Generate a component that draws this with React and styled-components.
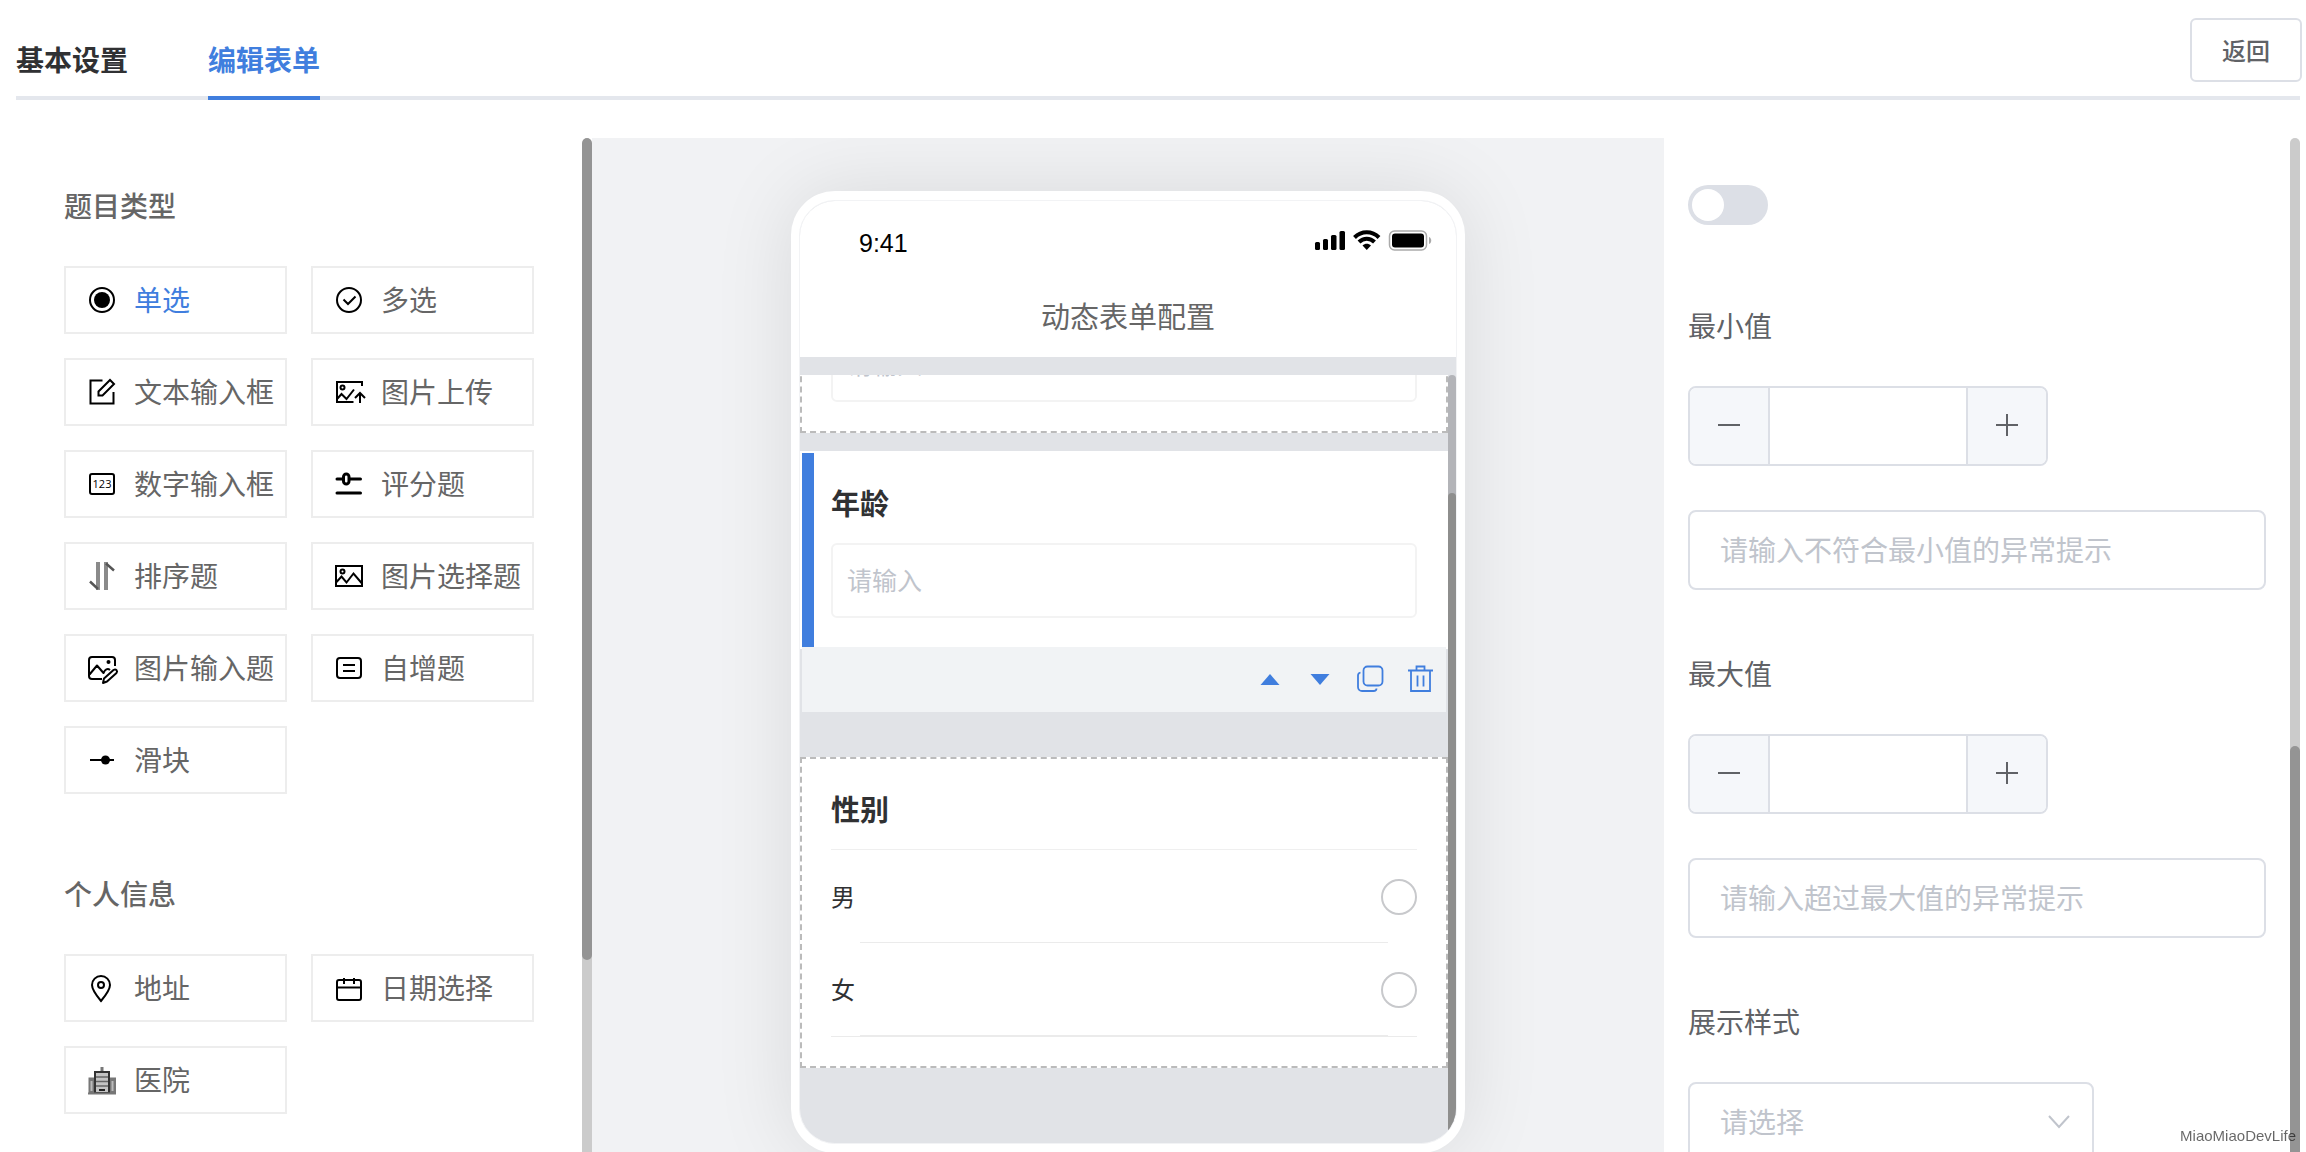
import React, { useLayoutEffect, useRef, useState } from 'react'
import styled, { createGlobalStyle } from 'styled-components'

const GlobalStyle = createGlobalStyle`
    * {
        box-sizing: border-box;
    }
    body {
        margin: 0;
        background: #fff;
        color: #666;
        font-family: "Noto Sans CJK SC", sans-serif;
        font-size: 28px;
    }
    button, input, select {
        font: inherit;
        color: inherit;
    }
    h2, h3, p {
        margin: 0;
    }
`

const stroke = { fill: 'none', stroke: '#000', strokeWidth: 2 }

const icons = {
    radio: <><circle cx="14" cy="14" r="12" {...stroke} /><circle cx="14" cy="14" r="8" /></>,
    check: <g {...stroke}><circle cx="14" cy="14" r="12" /><path d="M8.5 13.5l4.5 4.5 7.5-7.5" /></g>,
    text: <g {...stroke}><path d="M14.5 2.5h-12v23h23V14" /><path d="M10.5 17.5v-4L22 2l4 4-11.500 11.500z" /></g>,
    upload: (
        <g {...stroke}>
            <path d="M27 8V4H2v20h16.500M2.500 20.500l4-4.500 5 5 7.500-9.500" />
            <circle cx="7.500" cy="9.500" r="2" />
            <path d="M25 25V15M20 20l5-5 5 5" />
        </g>
    ),
    number: (
        <>
            <rect x="2" y="4" width="24" height="20" rx="2" {...stroke} />
            <text x="14" y="18" textAnchor="middle" fontFamily="Open Sans, sans-serif" fontWeight="500" fontSize="11">123</text>
        </>
    ),
    rate: (
        <g {...stroke} strokeWidth="3" strokeLinecap="round">
            <path d="M2 9h6M15 9h10.500" />
            <rect x="8.500" y="4" width="5.500" height="10" rx="2.750" />
            <path d="M2 23h23.500" />
        </g>
    ),
    sort: (
        <g fill="none">
            <path d="M10 0v28M18 0v28" stroke="#8a8a8a" strokeWidth="4" />
            <path d="M2 19.500l8 7.500M18 1.500l8 7" stroke="#555" strokeWidth="2.500" />
        </g>
    ),
    picture: (
        <g {...stroke}>
            <rect x="1" y="4" width="26" height="20" />
            <circle cx="7.500" cy="9.500" r="2" />
            <path d="M1.500 20l5-5.500 5 6 7-9L27 21.500" />
        </g>
    ),
    pictureEdit: (
        <>
            <g {...stroke} strokeLinejoin="round">
                <path d="M14 25H4a3 3 0 0 1-3-3V6a3 3 0 0 1 3-3h20a3 3 0 0 1 3 3v6" />
                <path d="M1.500 20.500l7.500-9 6.500 7.500c1.500-3.500 4-5 6.500-3" />
                <path d="M15 29l1-4.500 9.500-8.500c2.500-1.500 4.500 1 3 3l-9.500 8.500z" />
            </g>
            <circle cx="20.500" cy="8" r="2" />
        </>
    ),
    list: <g {...stroke}><rect x="2" y="4" width="24" height="20" rx="3" /><path d="M8 11h12M8 17h12" /></g>,
    slider: <><path d="M2 14h24" {...stroke} /><circle cx="17.500" cy="14" r="4.500" /></>,
    pin: <g {...stroke}><path d="M13 27C8 21 4 16 4 11a9 9 0 0 1 18 0c0 5-4 10-9 16z" /><circle cx="13" cy="11" r="3" /></g>,
    calendar: <g {...stroke}><rect x="2" y="6" width="24" height="20" rx="2" /><path d="M2 13.500h24M9 4v6M19 4v6" /></g>,
    hospital: (
        <>
            <path d="M0.500 11.500h6V28h-6zM22 11.500h6V28h-6z" fill="#777" />
            <path d="M14 1v5" stroke="#777" strokeWidth="3" />
            <rect x="7" y="6" width="14" height="21" fill="#c4c4c4" stroke="#333" strokeWidth="2" />
            <path d="M8 11h12M8 15.500h12M8 20h12" stroke="#666" strokeWidth="1.500" />
            <path d="M3.500 15v10M24.500 15v10" stroke="#bbb" strokeWidth="2" />
            <path d="M11 24h6" stroke="#222" strokeWidth="2" />
            <path d="M0 27.500h28" stroke="#777" strokeWidth="2" />
        </>
    ),
}

const groups = [
    {
        title: '题目类型',
        items: [
            ['radio', '单选'],
            ['check', '多选'],
            ['text', '文本输入框'],
            ['upload', '图片上传'],
            ['number', '数字输入框'],
            ['rate', '评分题'],
            ['sort', '排序题'],
            ['picture', '图片选择题'],
            ['pictureEdit', '图片输入题'],
            ['list', '自增题'],
            ['slider', '滑块'],
        ],
    },
    {
        title: '个人信息',
        items: [
            ['pin', '地址'],
            ['calendar', '日期选择'],
            ['hospital', '医院'],
        ],
    },
]

const limits = [
    { id: 'min', label: '最小值', placeholder: '请输入不符合最小值的异常提示' },
    { id: 'max', label: '最大值', placeholder: '请输入超过最大值的异常提示' },
]

function Limit({ id, label, placeholder }) {
    const [value, setValue] = useState('')

    return (
        <Field>
            <FieldLabel htmlFor={id}>{label}</FieldLabel>
            <Stepper>
                <StepButton aria-label="减少" onClick={() => setValue(Number(value) - 1)}>
                    <svg width="22" height="26" viewBox="0 0 22 26"><path d="M0 13h22" /></svg>
                </StepButton>
                <StepInput id={id} value={value} onChange={(e) => setValue(e.target.value)} />
                <StepButton aria-label="增加" onClick={() => setValue(Number(value) + 1)}>
                    <svg width="22" height="26" viewBox="0 0 22 26"><path d="M0 13h22M11 2v22" /></svg>
                </StepButton>
            </Stepper>
            <TextInput aria-label={label + '提示'} placeholder={placeholder} />
        </Field>
    )
}

function Preview() {
    const list = useRef(null)

    // the first question is already half scrolled away
    useLayoutEffect(() => {
        list.current.scrollTop = 80
    }, [])

    return (
        <Phone>
            <Screen>
                <PhoneHeader>
                    <StatusBar>
                        <span>9:41</span>
                        <svg width="118" height="24" viewBox="0 0 118 24">
                            <rect x="1" y="14" width="5" height="8" rx="1.500" />
                            <rect x="9" y="11" width="5" height="11" rx="1.500" />
                            <rect x="17" y="7" width="5.500" height="15" rx="1.500" />
                            <rect x="25.500" y="3" width="5.500" height="19" rx="1.500" />
                            <g fill="none" stroke="#000" strokeWidth="4">
                                <path d="M40.500 9.500c7-7 17.500-7 24.500 0" />
                                <path d="M45 14c4.500-4.500 11-4.500 15.500 0" />
                            </g>
                            <path d="M48.500 17.500c2.500-2.500 6-2.500 8.500 0L52.750 22z" />
                            <rect x="75.500" y="3" width="37" height="19" rx="5" fill="none" stroke="#aaa" strokeWidth="1.500" />
                            <rect x="78" y="5.500" width="32" height="14" rx="3" />
                            <path d="M115 9c3 1 3 6 0 7z" fill="#aaa" />
                        </svg>
                    </StatusBar>
                    <PhoneTitle>动态表单配置</PhoneTitle>
                </PhoneHeader>
                <ListArea>
                    <List ref={list}>
                        <Card>
                            <Answer aria-label="姓名" placeholder="请输入" />
                        </Card>
                        <Card $active>
                            <Question as="label" htmlFor="age">年龄</Question>
                            <Answer id="age" placeholder="请输入" />
                        </Card>
                        <Tools>
                            <Tool aria-label="上移">
                                <svg width="28" height="28" viewBox="0 0 28 28"><path d="M4.500 20L14 9l9.500 11z" fill="#407ede" /></svg>
                            </Tool>
                            <Tool aria-label="下移">
                                <svg width="28" height="28" viewBox="0 0 28 28"><path d="M4.500 9L14 20l9.500-11z" fill="#407ede" /></svg>
                            </Tool>
                            <Tool aria-label="复制">
                                <svg width="28" height="28" viewBox="0 0 28 28">
                                    <g fill="none" stroke="#407ede" strokeWidth="1.800">
                                        <rect x="7.500" y="1.500" width="19" height="19" rx="4" />
                                        <path d="M4.500 7.500C2.500 8 2 9 2 10.500V22a4 4 0 0 0 4 4h11.500c2 0 3-1 3-2.500" />
                                    </g>
                                </svg>
                            </Tool>
                            <Tool aria-label="删除">
                                <svg width="28" height="28" viewBox="0 0 28 28">
                                    <path d="M2 5.500h25M5 5.500v20.500h19V5.500M10.500 5.500V1.500h8v4M11.500 10.500v11M17.500 10.500v11" fill="none" stroke="#407ede" strokeWidth="1.800" />
                                </svg>
                            </Tool>
                        </Tools>
                        <Card>
                            <Question>性别</Question>
                            <Options>
                                <Option><span>男</span><input type="radio" name="gender" /></Option>
                                <Option><span>女</span><input type="radio" name="gender" /></Option>
                            </Options>
                        </Card>
                    </List>
                    <PhoneTrack><PhoneThumb /></PhoneTrack>
                </ListArea>
            </Screen>
        </Phone>
    )
}

function App() {
    return (
        <Page>
            <GlobalStyle />
            <Header>
                <Tabs>
                    <Tab href="#base">基本设置</Tab>
                    <Tab href="#form" $active>编辑表单</Tab>
                </Tabs>
                <BackButton>返回</BackButton>
            </Header>
            <Main>
                <Pane>
                    <Types>
                        {groups.map((group) => (
                            <section key={group.title}>
                                <GroupTitle>{group.title}</GroupTitle>
                                <Grid>
                                    {group.items.map(([icon, name]) => (
                                        <TypeButton key={name} $active={name === '单选'}>
                                            <svg width="28" height="28" viewBox="0 0 28 28">{icons[icon]}</svg>
                                            <span>{name}</span>
                                        </TypeButton>
                                    ))}
                                </Grid>
                            </section>
                        ))}
                    </Types>
                    <Track><Thumb $from={0} $size={822} /></Track>
                </Pane>
                <Canvas>
                    <Preview />
                </Canvas>
                <Pane>
                    <Settings>
                        <Switch type="checkbox" role="switch" aria-label="开关" />
                        {limits.map((item) => <Limit key={item.id} {...item} />)}
                        <Field>
                            <FieldLabel htmlFor="display">展示样式</FieldLabel>
                            <SelectBox>
                                <select id="display" defaultValue="">
                                    <option value="">请选择</option>
                                </select>
                                <svg width="22" height="14" viewBox="0 0 22 14">
                                    <path d="M1 1l10 11L21 1" fill="none" stroke="#c0c4cc" strokeWidth="2" />
                                </svg>
                            </SelectBox>
                        </Field>
                    </Settings>
                    <Track><Thumb $from={608} $size={600} /></Track>
                </Pane>
            </Main>
            <Watermark>MiaoMiaoDevLife</Watermark>
        </Page>
    )
}

const Page = styled.div`
    display: flex;
    flex-direction: column;
    height: 100vh;
    overflow: hidden;
`

const Header = styled.header`
    display: flex;
    justify-content: space-between;
    align-items: flex-start;
    height: 100px;
    flex: none;
    margin: 0 6px 38px 16px;
    box-shadow: inset 0 -4px 0 #e4e7ed;
`

const Tabs = styled.nav`
    display: flex;
    gap: 80px;
`

const Tab = styled.a`
    padding: 40px 0 18px;
    line-height: 38px;
    font-weight: 600;
    text-decoration: none;
    color: ${(props) => (props.$active ? '#407ede' : '#303133')};
    border-bottom: 4px solid ${(props) => (props.$active ? '#407ede' : 'transparent')};
`

const BackButton = styled.button`
    width: 112px;
    height: 64px;
    margin: 18px -2px 0 0;
    padding: 0 0 2px;
    background: #fff;
    border: 2px solid #dcdfe6;
    border-radius: 6px;
    color: #606266;
    font-size: 24px;
    font-weight: 500;
`

const Main = styled.main`
    display: grid;
    grid-template-columns: 576px 1fr 636px;
    grid-template-rows: minmax(0, 1fr);
    flex: 1;
    min-height: 0;
    margin: 0 6px 0 16px;
`

const Pane = styled.div`
    display: flex;
    min-width: 0;
    overflow: hidden;
`

const Track = styled.div`
    width: 10px;
    border-radius: 5px 5px 0 0;
    background: #cbcbcb;
    overflow: hidden;
`

const Thumb = styled.div`
    height: ${(props) => props.$size}px;
    margin-top: ${(props) => props.$from}px;
    border-radius: 5px;
    background: #949494;
`

const Types = styled.div`
    display: flex;
    flex-direction: column;
    gap: 80px;
    flex: 1;
    padding: 48px;
`

const GroupTitle = styled.h2`
    margin-bottom: 42px;
    font-size: 28px;
    line-height: 38px;
    font-weight: 500;
    color: #666;
`

const Grid = styled.div`
    display: grid;
    grid-template-columns: 1fr 1fr;
    gap: 24px;
`

const TypeButton = styled.button`
    display: flex;
    align-items: center;
    gap: 18px;
    height: 68px;
    padding: 0 0 0 22px;
    background: #fff;
    border: 2px solid #ededed;
    color: ${(props) => (props.$active ? '#407ede' : '#666')};
    white-space: nowrap;

    svg {
        flex: none;
        overflow: visible;
    }

    span {
        padding-bottom: 2px;
    }
`

const Canvas = styled.div`
    display: flex;
    justify-content: center;
    align-items: flex-start;
    padding-top: 53px;
    background: #f1f2f4;
    overflow: hidden;
`

const Phone = styled.div`
    width: 674px;
    padding: 9px 8px;
    background: #fff;
    border-radius: 44px;
    box-shadow: 0 0 80px rgba(0, 0, 0, 0.1);
`

const Screen = styled.div`
    display: flex;
    flex-direction: column;
    height: 944px;
    border: 1px solid #f2f3f5;
    border-radius: 36px;
    background: #e1e3e7;
    overflow: hidden;
`

const PhoneHeader = styled.div`
    height: 156px;
    flex: none;
    margin-bottom: 18px;
    background: #fff;
`

const StatusBar = styled.div`
    display: flex;
    justify-content: space-between;
    padding: 27px 24px 0 59px;
    line-height: 30px;
    font-family: "Liberation Sans", sans-serif;
    font-size: 25px;
    color: #000;
`

const PhoneTitle = styled.h2`
    margin-top: 38px;
    line-height: 38px;
    font-size: 29px;
    font-weight: 400;
    text-align: center;
`

const ListArea = styled.div`
    display: flex;
    flex: 1;
    min-height: 0;
`

const List = styled.div`
    flex: 1;
    padding-bottom: 80px;
    overflow: hidden;
`

const PhoneTrack = styled.div`
    width: 8px;
    border-radius: 4px 4px 0 0;
    background: #b3b4b8;
`

const PhoneThumb = styled.div`
    height: calc(100% - 118px);
    margin-top: 118px;
    border-radius: 4px 4px 0 0;
    background: #8e8e8d;
`

const Card = styled.div`
    margin-bottom: ${(props) => (props.$active ? 0 : 18)}px;
    padding: 30px 29px 29px;
    border: 2px dashed ${(props) => (props.$active ? '#fff' : '#bbb')};
    background: ${(props) => (props.$active
        ? 'linear-gradient(#407ede, #407ede) left / 12px 100% no-repeat padding-box, #fff'
        : '#fff')};
`

const Question = styled.h3`
    display: block;
    margin-bottom: 22px;
    line-height: 38px;
    font-size: 29px;
    font-weight: 600;
    color: #303133;
`

const Answer = styled.input`
    display: block;
    width: 100%;
    height: 75px;
    padding: 0 14px 3px;
    border: 2px solid #f3f3f3;
    border-radius: 6px;
    background: #fff;
    font-size: 25px;

    &::placeholder {
        color: #c0c4cc;
    }
`

const Tools = styled.div`
    position: relative;
    display: flex;
    justify-content: flex-end;
    align-items: center;
    gap: 22px;
    height: 65px;
    margin: -2px 2px 45px;
    padding: 0 12px 1px 0;
    background: #f1f3f5;
`

const Tool = styled.button`
    display: flex;
    padding: 0;
    border: none;
    background: none;
`

const Options = styled.div`
    border-top: 1px solid #efefef;
    border-bottom: 1px solid #ebebeb;
`

const Option = styled.label`
    display: flex;
    justify-content: space-between;
    align-items: center;
    height: 93px;
    font-size: 24px;
    color: #303133;
    background: linear-gradient(#ebebeb, #ebebeb) bottom / calc(100% - 58px) 1px no-repeat;

    span {
        padding-bottom: 3px;
    }

    input {
        appearance: none;
        width: 36px;
        height: 36px;
        margin: 0;
        border: 2px solid #c8c9cc;
        border-radius: 50%;
    }
`

const Settings = styled.div`
    flex: 1;
    min-width: 0;
    padding: 47px 24px;
`

const Switch = styled.input`
    appearance: none;
    display: block;
    width: 80px;
    height: 40px;
    margin: 0 0 81px;
    padding: 4px;
    border-radius: 20px;
    background: #dcdfe6;

    &::before {
        content: '';
        display: block;
        width: 32px;
        height: 32px;
        border-radius: 50%;
        background: #fff;
    }
`

const Field = styled.div`
    margin-bottom: 64px;
`

const FieldLabel = styled.label`
    display: block;
    margin-bottom: 42px;
    line-height: 38px;
    color: #606266;
`

const Stepper = styled.div`
    display: grid;
    grid-template-columns: 78px 1fr 78px;
    width: 360px;
    height: 80px;
    margin-bottom: 44px;
    border: 2px solid #dcdfe6;
    border-radius: 8px;
    overflow: hidden;
`

const StepButton = styled.button`
    display: flex;
    justify-content: center;
    align-items: center;
    padding: 0 0 2px;
    border: none;
    background: #f5f7fa;

    path {
        fill: none;
        stroke: #606266;
        stroke-width: 2;
    }
`

const StepInput = styled.input`
    min-width: 0;
    border: solid #dcdfe6;
    border-width: 0 2px;
    background: #fff;
    text-align: center;
`

const TextInput = styled.input`
    display: block;
    width: 100%;
    max-width: 578px;
    height: 80px;
    padding: 0 30px 2px;
    border: 2px solid #dcdfe6;
    border-radius: 8px;
    background: #fff;

    &::placeholder {
        color: #c0c4cc;
    }
`

const SelectBox = styled.div`
    display: grid;
    align-items: center;
    width: 406px;

    select, svg {
        grid-area: 1 / 1;
    }

    select {
        appearance: none;
        height: 80px;
        padding: 0 30px 2px;
        border: 2px solid #dcdfe6;
        border-radius: 8px;
        background: #fff;
        color: #c0c4cc;
    }

    svg {
        justify-self: end;
        margin-right: 24px;
    }
`

const Watermark = styled.div`
    position: fixed;
    right: 10px;
    bottom: 6px;
    font-family: "Liberation Sans", sans-serif;
    font-size: 15px;
    line-height: 20px;
    color: rgba(0, 0, 0, 0.6);
`

export default App
